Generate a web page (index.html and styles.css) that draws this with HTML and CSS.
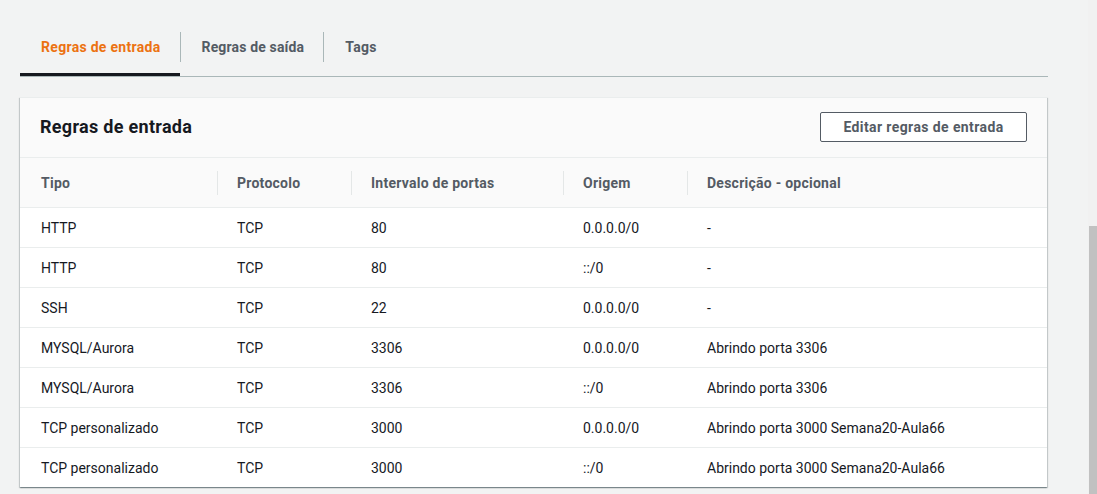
FILE: index.html
```html
<!DOCTYPE html>
<html lang="pt-BR">
<head>
<meta charset="utf-8">
<title>Regras de entrada</title>
<link rel="stylesheet" href="styles.css">
</head>
<body>
<div class="page">
  <nav class="tabs">
    <div class="tab active">Regras de entrada</div>
    <span class="tab-sep"></span>
    <div class="tab tab-out">Regras de saída</div>
    <span class="tab-sep"></span>
    <div class="tab">Tags</div>
  </nav>

  <section class="card">
    <header class="card-header">
      <h2 class="card-title">Regras de entrada</h2>
      <button class="btn">Editar regras de entrada</button>
    </header>
    <table class="rules">
      <colgroup>
        <col class="c1"><col class="c2"><col class="c3"><col class="c4"><col class="c5">
      </colgroup>
      <thead>
        <tr>
          <th>Tipo</th>
          <th><span class="hsep"></span>Protocolo</th>
          <th><span class="hsep"></span>Intervalo de portas</th>
          <th><span class="hsep"></span>Origem</th>
          <th><span class="hsep"></span>Descrição - opcional</th>
        </tr>
      </thead>
      <tbody>
        <tr><td>HTTP</td><td>TCP</td><td>80</td><td>0.0.0.0/0</td><td>-</td></tr>
        <tr><td>HTTP</td><td>TCP</td><td>80</td><td>::/0</td><td>-</td></tr>
        <tr><td>SSH</td><td>TCP</td><td>22</td><td>0.0.0.0/0</td><td>-</td></tr>
        <tr><td>MYSQL/Aurora</td><td>TCP</td><td>3306</td><td>0.0.0.0/0</td><td>Abrindo porta 3306</td></tr>
        <tr><td>MYSQL/Aurora</td><td>TCP</td><td>3306</td><td>::/0</td><td>Abrindo porta 3306</td></tr>
        <tr><td>TCP personalizado</td><td>TCP</td><td>3000</td><td>0.0.0.0/0</td><td>Abrindo porta 3000 Semana20-Aula66</td></tr>
        <tr><td>TCP personalizado</td><td>TCP</td><td>3000</td><td>::/0</td><td>Abrindo porta 3000 Semana20-Aula66</td></tr>
      </tbody>
    </table>
  </section>
</div>
<div class="scroll-track"><div class="scroll-thumb"></div></div>
</body>
</html>
```

FILE: styles.css
```css
html, body {
  margin: 0;
  padding: 0;
}
body {
  background: #f2f3f3;
  font-family: "Roboto", "Open Sans", "Liberation Sans", sans-serif;
  color: #16191f;
  font-size: 14px;
  overflow: hidden;
  height: 494px;
}
.page {
  padding: 22px 49px 0 20px;
}
.tabs {
  display: flex;
  align-items: center;
  border-bottom: 1px solid #aab7b8;
  height: 54px;
}
.tab {
  position: relative;
  height: 54px;
  display: flex;
  align-items: center;
  padding: 0 21px 4px 21px;
  font-weight: 700;
  letter-spacing: 0.3px;
  color: #545b64;
  box-sizing: border-box;
}
.tab.active {
  color: #ec7211;
  padding: 0 19px 4px 21px;
}
.tab.tab-out {
  letter-spacing: 0.15px;
  padding: 0 19px 4px 21px;
}
.tab.active::after {
  content: "";
  position: absolute;
  left: 0;
  right: 0;
  bottom: 0;
  height: 3px;
  background: #16191f;
}
.tab-sep {
  width: 1px;
  height: 30px;
  margin-bottom: 4px;
  background: #aab7b8;
}
.card {
  margin: 20px 1px 0 0;
  background: #fff;
  box-shadow: 0 1px 1px 0 rgba(0, 28, 36, 0.3), 1px 1px 1px 0 rgba(0, 28, 36, 0.15), -1px 1px 1px 0 rgba(0, 28, 36, 0.15);
  border-top: 1px solid #eaeded;
}
.card-header {
  display: flex;
  align-items: center;
  justify-content: space-between;
  height: 59px;
  padding: 0 20px;
  background: #fafafa;
}
.card-title {
  margin: 0 0 2px;
  font-size: 18px;
  font-weight: 700;
  letter-spacing: 0.3px;
  color: #16191f;
}
.btn {
  width: 207px;
  height: 30px;
  margin-bottom: 2px;
  border: 1px solid #545b64;
  border-radius: 2px;
  background: #fff;
  color: #545b64;
  font-family: inherit;
  font-size: 14px;
  font-weight: 700;
  letter-spacing: 0.4px;
  padding: 0;
}
.rules {
  width: 100%;
  border-collapse: collapse;
  table-layout: fixed;
}
.c1 { width: 197px; }
.c2 { width: 134px; }
.c3 { width: 212px; }
.c4 { width: 124px; }
.rules th {
  position: relative;
  height: 49px;
  padding: 0 0 0 20px;
  text-align: left;
  font-weight: 700;
  letter-spacing: 0.25px;
  color: #545b64;
  background: #fafafa;
  border-top: 1px solid #eaeded;
}
.rules th:first-child,
.rules td:first-child {
  padding-left: 21px;
}
.hsep {
  position: absolute;
  left: 0;
  top: 13px;
  height: 24px;
  width: 1px;
  background: #e4e7e7;
}
.rules td {
  height: 39px;
  padding: 0 0 0 20px;
  border-top: 1px solid #eaeded;
  color: #16191f;
}
.scroll-track {
  position: fixed;
  top: 0;
  right: 0;
  width: 9px;
  height: 494px;
  background: #f1f1f1;
}
.scroll-thumb {
  position: absolute;
  top: 226px;
  left: 1px;
  right: 0;
  bottom: 0;
  background: #c1c1c1;
}
```
